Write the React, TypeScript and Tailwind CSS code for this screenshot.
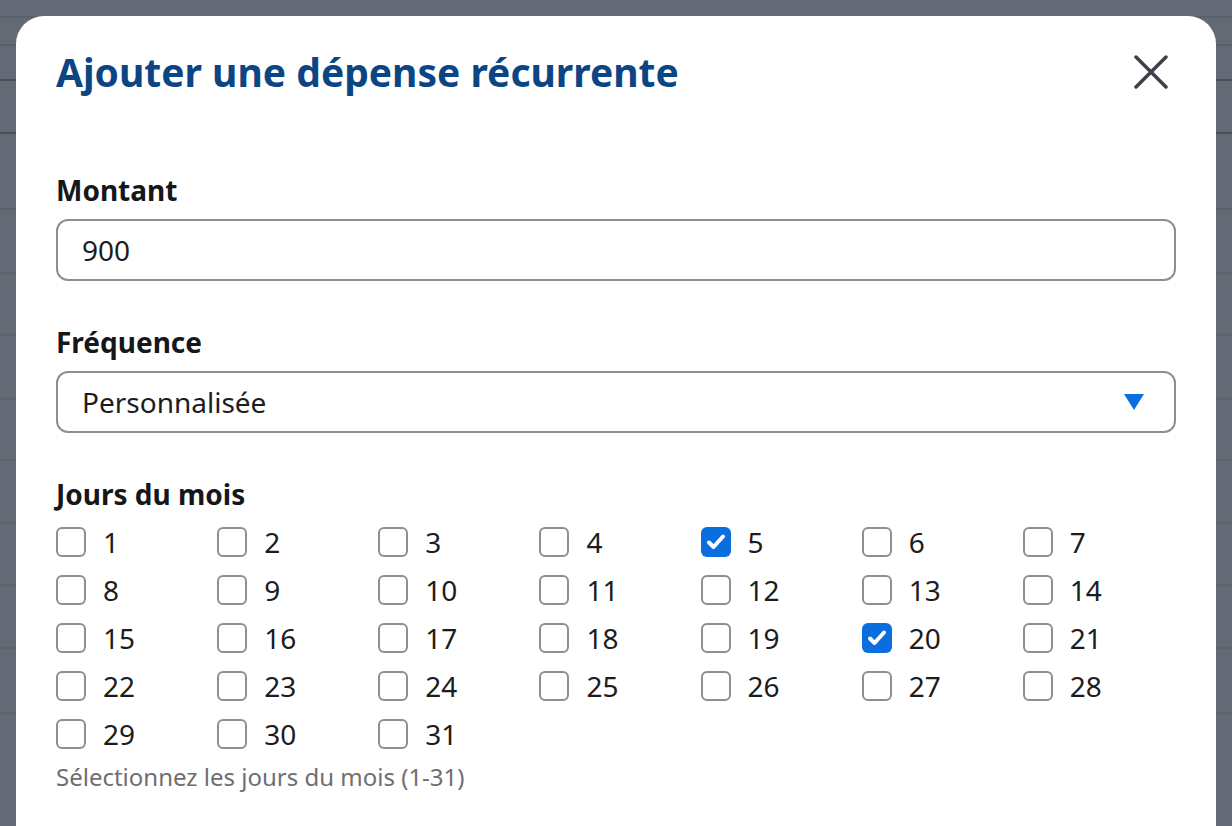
import React from 'react';

const days = Array.from({ length: 31 }, (_, i) => i + 1);
const selected = [5, 20];

// page rows that sit behind the dialog overlay
const rowLines = [
  { h: 'h-[18px]', line: 'border-[#5a606a]' },
  { h: 'h-[28px]', line: 'border-[#5a606a]' },
  { h: 'h-[35px]', line: 'border-[#4a4f58]' },
  { h: 'h-[53px]', line: 'border-[#4a4f58]' },
  { h: 'h-[76px]', line: 'border-[#5a606a]' },
  { h: 'h-[64px]', line: 'border-[#5d636d]' },
  { h: 'h-[62px]', line: 'border-[#5d636d]' },
  { h: 'h-[64px]', line: 'border-[#5d636d]' },
  { h: 'h-[61px]', line: 'border-[#5d636d]' },
  { h: 'h-[63px]', line: 'border-[#5d636d]' },
  { h: 'h-[62px]', line: 'border-[#5d636d]' },
  { h: 'h-[63px]', line: 'border-[#5d636d]' },
  { h: 'h-[65px]', line: 'border-[#5d636d]' },
];

const DayBox = ({ day, checked }: { day: number; checked: boolean }) => (
  <label className="flex items-center gap-[17px] h-[30px]">
    {checked ? (
      <span className="w-[30px] h-[30px] rounded-[6px] bg-[#0a6edf] flex items-center justify-center">
        <svg width="24" height="24" viewBox="0 0 24 24" fill="none">
          <path d="M5 12.5l4.5 4.5L19 6.5" stroke="white" strokeWidth="4" strokeLinecap="round" strokeLinejoin="round" />
        </svg>
      </span>
    ) : (
      <span className="w-[30px] h-[30px] rounded-[6px] border-2 border-[#8e8e93] bg-white" />
    )}
    <span className="text-[28px] text-[#1c1c1e] leading-none">{day}</span>
  </label>
);

export default function App() {
  return (
    <div className="relative h-[826px] overflow-hidden bg-[#636a75] font-['Noto_Sans',sans-serif]">
      <div className="flex flex-col">
        {rowLines.map((r, i) => (
          <div key={i} className={`${r.h} border-b-2 ${r.line}`} />
        ))}
      </div>

      <div className="absolute inset-0 px-4 pt-4">
        <div className="h-full bg-white rounded-t-[28px] flex flex-col">
          <div className="flex items-center justify-between pl-10 pr-12 pt-8">
            <h1 className="text-[39px] leading-[48px] font-bold text-[#0b4584]">Ajouter une dépense récurrente</h1>
            <button className="w-[34px] h-[34px] flex items-center justify-center">
              <svg width="34" height="34" viewBox="0 0 34 34" fill="none">
                <path d="M2 2l30 30M32 2L2 32" stroke="#3d4047" strokeWidth="3.5" strokeLinecap="round" />
              </svg>
            </button>
          </div>

          <div className="px-10 pt-[76px] flex flex-col">
            <label className="text-[28px] leading-9 font-bold text-[#15171a]">Montant</label>
            <div className="mt-[11px] h-[62px] rounded-[12px] border-2 border-[#8e8e93] flex items-center px-6 text-[28px] text-[#1c1c1e]">
              900
            </div>

            <label className="mt-[43px] text-[28px] leading-9 font-bold text-[#15171a]">Fréquence</label>
            <div className="mt-[11px] h-[62px] rounded-[12px] border-2 border-[#8e8e93] flex items-center justify-between pl-6 pr-[30px] text-[28px] text-[#1c1c1e]">
              <span>Personnalisée</span>
              <svg width="20" height="16" viewBox="0 0 20 16">
                <path d="M0 0h20L10 16z" fill="#0a6edf" />
              </svg>
            </div>

            <label className="mt-[43px] text-[28px] leading-9 font-bold text-[#15171a]">Jours du mois</label>
            <div className="mt-[15px] grid grid-cols-7 gap-x-2 gap-y-[18px]">
              {days.map((d) => (
                <DayBox key={d} day={d} checked={selected.includes(d)} />
              ))}
            </div>
            <p className="mt-[13px] text-[24px] leading-[30px] text-[#6e6e73]">Sélectionnez les jours du mois (1-31)</p>
          </div>
        </div>
      </div>
    </div>
  );
}
